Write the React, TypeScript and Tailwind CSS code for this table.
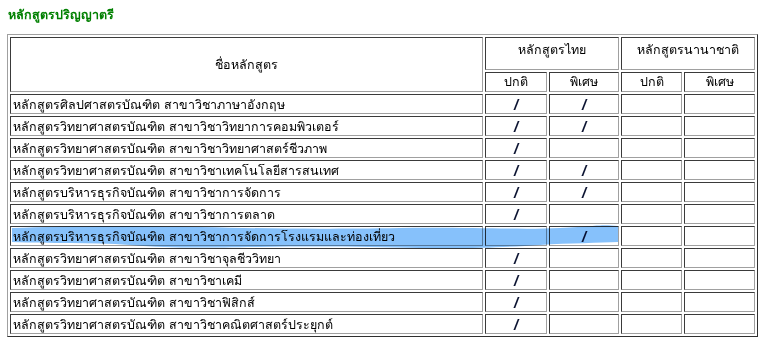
import React from "react";

type Course = { name: string; thaiNormal?: boolean; thaiSpecial?: boolean };

const courses: Course[] = [
  { name: "หลักสูตรศิลปศาสตรบัณฑิต สาขาวิชาภาษาอังกฤษ", thaiNormal: true, thaiSpecial: true },
  { name: "หลักสูตรวิทยาศาสตรบัณฑิต สาขาวิชาวิทยาการคอมพิวเตอร์", thaiNormal: true, thaiSpecial: true },
  { name: "หลักสูตรวิทยาศาสตรบัณฑิต สาขาวิชาวิทยาศาสตร์ชีวภาพ", thaiNormal: true },
  { name: "หลักสูตรวิทยาศาสตรบัณฑิต สาขาวิชาเทคโนโลยีสารสนเทศ", thaiNormal: true, thaiSpecial: true },
  { name: "หลักสูตรบริหารธุรกิจบัณฑิต สาขาวิชาการจัดการ", thaiNormal: true, thaiSpecial: true },
  { name: "หลักสูตรบริหารธุรกิจบัณฑิต สาขาวิชาการตลาด", thaiNormal: true },
  { name: "หลักสูตรบริหารธุรกิจบัณฑิต สาขาวิชาการจัดการโรงแรมและท่องเที่ยว", thaiSpecial: true },
  { name: "หลักสูตรวิทยาศาสตรบัณฑิต สาขาวิชาจุลชีววิทยา", thaiNormal: true },
  { name: "หลักสูตรวิทยาศาสตรบัณฑิต สาขาวิชาเคมี", thaiNormal: true },
  { name: "หลักสูตรวิทยาศาสตรบัณฑิต สาขาวิชาฟิสิกส์", thaiNormal: true },
  { name: "หลักสูตรวิทยาศาสตรบัณฑิต สาขาวิชาคณิตศาสตร์ประยุกต์", thaiNormal: true },
];

// old-style inset cell border: dark top/left, grey bottom/right
const cell =
  "border border-t-[#3a3a3a] border-l-[#3a3a3a] border-b-[#a0a0a0] border-r-[#a0a0a0] p-0";

function Mark({ on }: { on?: boolean }) {
  return (
    <td className={`${cell} h-[20px] pt-[2px] align-top text-center leading-[15px]`}>
      {on && (
        <span
          className="text-[15px] font-bold italic text-[#0a1230]"
          style={{ fontFamily: "'Liberation Sans', Arial, sans-serif" }}
        >
          /
        </span>
      )}
    </td>
  );
}

export default function App() {
  return (
    <div
      className="relative h-[339px] w-[769px] overflow-hidden bg-white text-black"
      style={{ fontFamily: "Tahoma, 'DejaVu Sans', 'Noto Sans', sans-serif" }}
    >
      <h1 className="ml-[8px] pt-[7px] text-[12.5px] font-bold leading-[16px] text-[#008000]">
        หลักสูตรปริญญาตรี
      </h1>

      <table className="ml-[7px] mt-[11px] w-[751px] table-fixed border-separate border-spacing-[2px] border border-t-[#a0a0a0] border-l-[#a0a0a0] border-b-[#303030] border-r-[#303030] text-[12.5px] leading-[16px]">
        <colgroup>
          <col className="w-[473px]" />
          <col className="w-[62px]" />
          <col className="w-[70px]" />
          <col className="w-[61px]" />
          <col className="w-[71px]" />
        </colgroup>
        <thead>
          <tr>
            <th rowSpan={2} className={`${cell} text-center font-normal`}>
              ชื่อหลักสูตร
            </th>
            <th colSpan={2} className={`${cell} h-[33px] pb-[8px] text-center font-normal`}>
              หลักสูตรไทย
            </th>
            <th colSpan={2} className={`${cell} h-[33px] pb-[8px] text-center font-normal`}>
              หลักสูตรนานาชาติ
            </th>
          </tr>
          <tr>
            <th className={`${cell} h-[20px] text-center font-normal`}>ปกติ</th>
            <th className={`${cell} h-[20px] text-center font-normal`}>พิเศษ</th>
            <th className={`${cell} h-[20px] text-center font-normal`}>ปกติ</th>
            <th className={`${cell} h-[20px] text-center font-normal`}>พิเศษ</th>
          </tr>
        </thead>
        <tbody>
          {courses.map((c) => (
            <tr key={c.name}>
              <td className={`${cell} h-[20px] whitespace-nowrap pl-[2px] pt-[3px] align-top text-left leading-[14px]`}>
                {c.name}
              </td>
              <Mark on={c.thaiNormal} />
              <Mark on={c.thaiSpecial} />
              <Mark />
              <Mark />
            </tr>
          ))}
        </tbody>
      </table>

      {/* highlighter stroke over the hotel management row */}
      <svg
        className="pointer-events-none absolute left-0 top-0 mix-blend-multiply"
        width="769"
        height="339"
        viewBox="0 0 769 339"
      >
        <path
          d="M12 228 C 60 226, 120 225, 200 227 S 330 229, 400 228 S 520 230, 560 228 S 600 224, 618 226
             L 618 242 C 600 243, 570 243, 540 245 S 470 249, 420 248 S 330 246, 260 247 S 170 248, 130 245 S 50 244, 12 242 Z"
          fill="#86c1fb"
        />
      </svg>
    </div>
  );
}
